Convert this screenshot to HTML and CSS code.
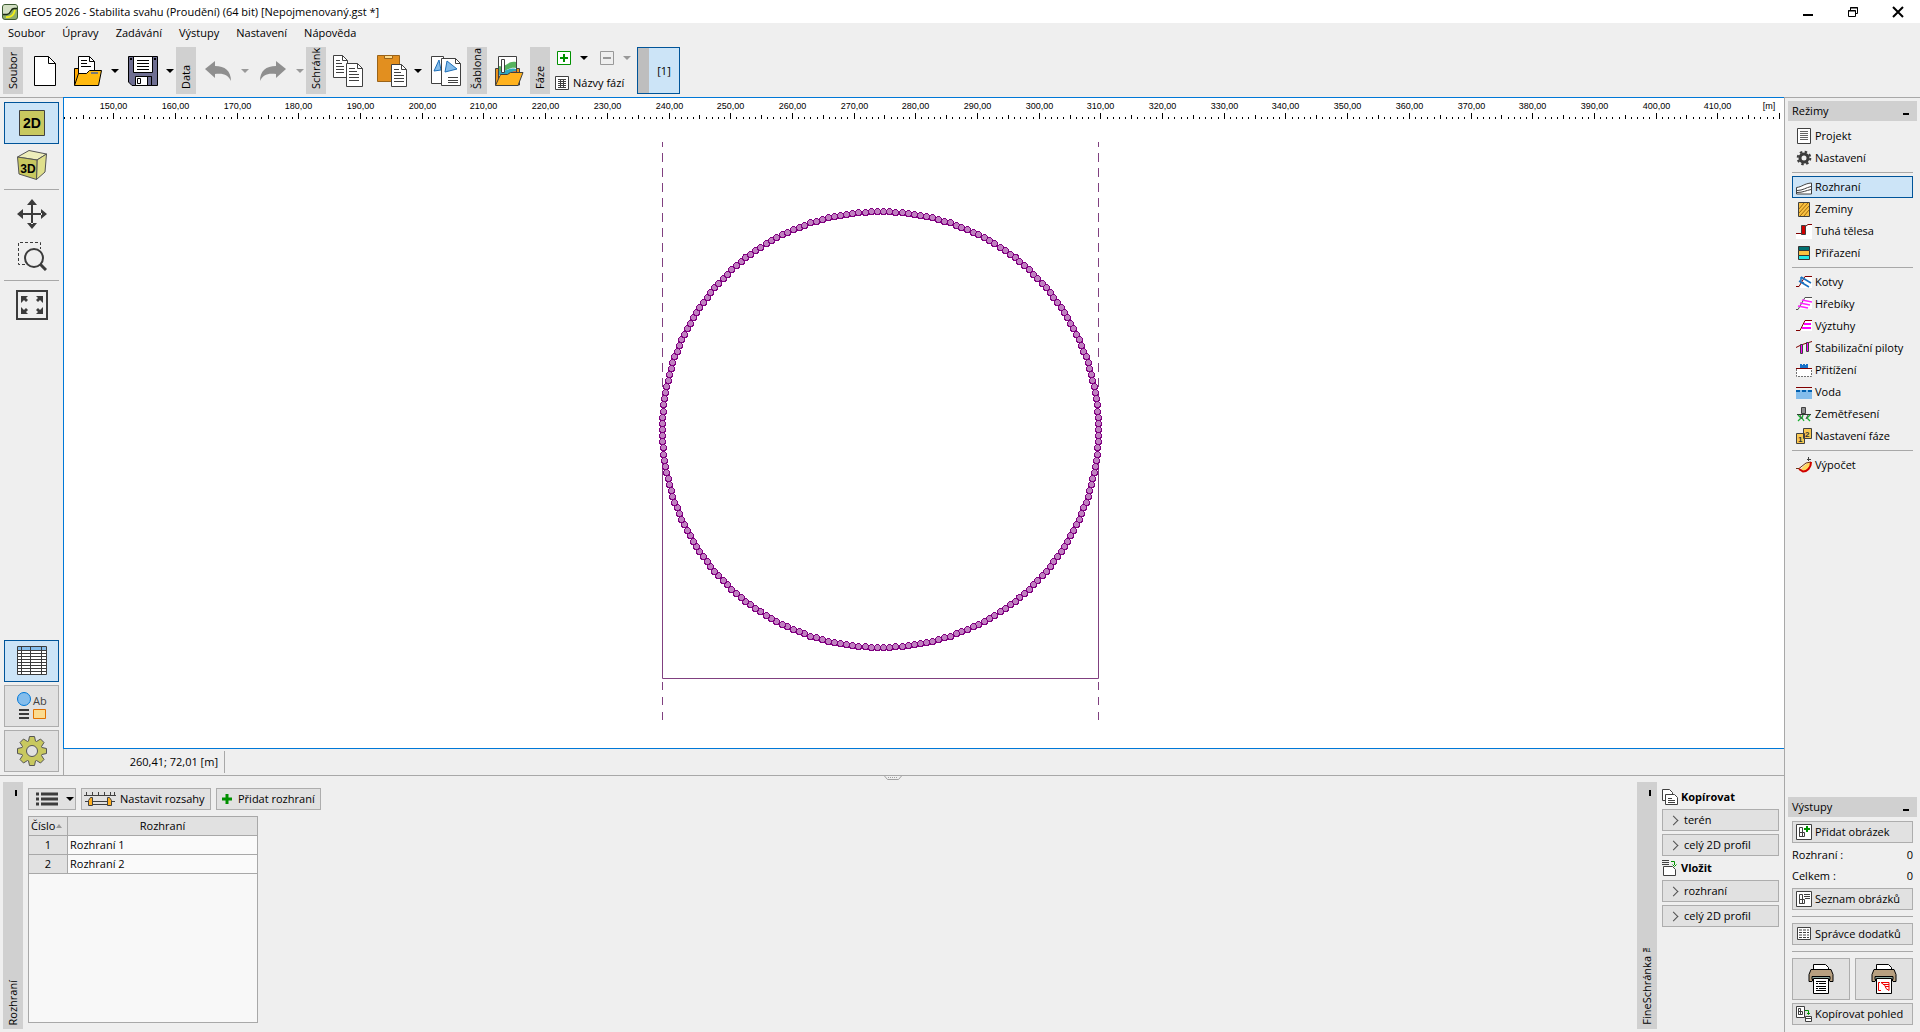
FILE: index.html
```html
<!DOCTYPE html>
<html lang="cs">
<head>
<meta charset="utf-8">
<title>GEO5 2026 - Stabilita svahu</title>
<link rel="stylesheet" href="styles.css">
</head>
<body>
<div class="window">
  <header class="titlebar">
    <svg class="app-icon" width="16" height="16" viewBox="0 0 16 16"><rect x=".5" y=".5" width="15" height="15" rx="2.5" fill="#8fae6c" stroke="#3c5a32"/><path d="M1 10h4c4 0 3-6 7-6h3V3a2 2 0 0 0-2-2H3a2 2 0 0 0-2 2z" fill="#d3dfc4"/><path d="M1 10.500h4c4 0 3-6 7-6h3" fill="none" stroke="#1c2a14" stroke-width="1.300"/><path d="M4 13c6 1 8-3 9-7" fill="none" stroke="#f2ee18" stroke-width="1.800"/></svg>
    <h1 class="title">GEO5 2026 - Stabilita svahu (Proudění) (64 bit) [Nepojmenovaný.gst *]</h1>
    <div class="window-buttons">
      <button class="window-button" aria-label="Minimalizovat"><svg width="12" height="12"><path d="M1 9h10" stroke="#000" stroke-width="2"/></svg></button>
      <button class="window-button" aria-label="Obnovit"><svg width="12" height="12" fill="none" stroke="#000"><path d="M1.500 4.500h7v6h-7zM1 5h8M3.500 4V1.500h7v6H9M3 2h8"/></svg></button>
      <button class="window-button" aria-label="Zavřít"><svg width="12" height="12"><path d="M1 1l10 10M11 1L1 11" stroke="#000" stroke-width="2"/></svg></button>
    </div>
  </header>

  <nav class="menubar">
    <button class="menu">Soubor</button><button class="menu">Úpravy</button><button class="menu">Zadávání</button><button class="menu">Výstupy</button><button class="menu">Nastavení</button><button class="menu">Nápověda</button>
  </nav>

  <div class="toolbar">
    <div class="tool-group">
      <span class="group-label">Soubor</span>
      <button class="tool" aria-label="Nový"><svg width="30" height="30"><path d="M4.500.5h14l7 7v22h-21z" fill="#fff" stroke="#000"/><path d="M18.500.5v7h7" fill="none" stroke="#000"/></svg></button>
      <button class="tool split" aria-label="Otevřít"><svg width="30" height="30"><path d="M1.500 29V12.500h8l2 3h13V29z" fill="#ffa800" stroke="#000"/><path d="M5.500 18V.5h11l5 5V18z" fill="#fff" stroke="#000"/><path d="M16.500.5v5h5M8 4.500h6M8 7.500h6M8 10.500h10" fill="none" stroke="#000"/><path d="M1.500 29.500l4-12h8l3-3h12l-3 15z" fill="#ffb90f" stroke="#000"/><path d="M18 17h7" stroke="#777" stroke-width="2"/></svg><span class="caret"></span></button>
      <button class="tool split" aria-label="Uložit"><svg width="30" height="30"><path d="M.5.5h29v29H4l-3.500-3.500z" fill="#6e6e91" stroke="#000"/><path d="M5.500.5h19v16h-19z" fill="#fff" stroke="#000"/><path d="M9 4.500h12M9 7.500h12M9 10.500h12M9 13.500h12" stroke="#000"/><path d="M7.500 20.500h16v9h-16z" fill="#fff" stroke="#000"/><path d="M19.500 20.500h4v9h-4z" fill="#6e6e91" stroke="#000"/><path d="M9.500 22.500h3v5h-3z" fill="#fff" stroke="#000"/><path d="M2 3h2M26 3h2" stroke="#000" stroke-width="2"/></svg><span class="caret"></span></button>
    </div>
    <div class="tool-group">
      <span class="group-label">Data</span>
      <button class="tool split" aria-label="Zpět"><svg width="30" height="30"><path d="M2 13L12 5v5c10 0 16 5 16 15-3-6-7-8-16-7v4z" fill="#8f8f8f"/></svg><span class="caret off"></span></button>
      <button class="tool split" aria-label="Vpřed"><svg width="30" height="30"><path d="M28 13L18 5v5C8 10 2 15 2 25c3-6 7-8 16-7v4z" fill="#8f8f8f"/></svg><span class="caret off"></span></button>
    </div>
    <div class="tool-group">
      <span class="group-label">Schránk</span>
      <button class="tool" aria-label="Kopírovat"><svg width="32" height="32" fill="#fff" stroke="#404040"><path d="M1.500.5h9l5 5v17h-14z"/><path d="M10.500.5v5h5M4 5.500h4M4 8.500h6M4 11.500h8M4 14.500h8M4 17.500h8" fill="none"/><path d="M14.500 8.500h11l5 5v18h-16z"/><path d="M25.500 8.500v5h5M17 13.500h6M17 16.500h8M17 19.500h10M17 22.500h10M17 25.500h10" fill="none"/></svg></button>
      <button class="tool split" aria-label="Vložit"><svg width="32" height="32" fill="#fff" stroke="#404040"><path d="M1.500.5h22v26h-22z" fill="#e28f1f" stroke="#9a6318"/><path d="M8.500.5h8v3h-8z" fill="#ffdc8c" stroke="#9a6318"/><path d="M15.500 9.500h10l5 5v17h-15z"/><path d="M25.500 9.500v5h5M18 14.500h5M18 17.500h7M18 20.500h10M18 23.500h10M18 26.500h10" fill="none"/></svg><span class="caret"></span></button>
      <button class="tool" aria-label="Kopírovat obrázek"><svg width="32" height="32" fill="#fff" stroke="#404040"><path d="M1.500 1.500h12v27h-12z"/><path d="M4 16l5-11 2 10z" fill="#84bdec" stroke="#1e6fb8"/><path d="M11.500 3.500h14l5 5v22h-19z"/><path d="M25.500 3.500v5h5" fill="none"/><path d="M15 17l2-11 10 8z" fill="#84bdec" stroke="#1e6fb8"/><path d="M18 22.500h10M18 25.500h10M18 27.500h10" fill="none"/></svg></button>
    </div>
    <div class="tool-group">
      <span class="group-label">Šablona</span>
      <button class="tool" aria-label="Šablona"><svg width="30" height="30"><path d="M1.500 29V12.500h24V29z" fill="#e8921a" stroke="#404040"/><path d="M4.500.5h18v22h-18z" fill="#fff" stroke="#404040"/><path d="M5 10c7 2 9-6 17-4v6c-8-1-9 4-17 3z" fill="#56b35f"/><path d="M5 15c8 1 9-4 17-2v6H5z" fill="#2fa8c0"/><path d="M12 20c4-3 6-5 10-5v6H12z" fill="#e8642a"/><path d="M7.500 3.500h3v13h-3z" fill="#fff" stroke="#404040"/><path d="M1.500 29.500l5-11h7l3-2h12.500l-5 13z" fill="#ffb21e" stroke="#404040"/></svg></button>
    </div>
    <div class="tool-group">
      <span class="group-label">Fáze</span>
      <div class="phases">
        <div class="phase-row">
          <button class="mini split" aria-label="Přidat fázi"><svg width="14" height="14"><path d="M.5.5h13v13H.5z" fill="#fff" stroke="#009000"/><path d="M7 3v8M3 7h8" stroke="#009000" stroke-width="2"/></svg><span class="caret"></span></button>
          <button class="mini split" aria-label="Odebrat fázi"><svg width="14" height="14"><path d="M.5.5h13v13H.5z" fill="none" stroke="#999"/><path d="M3 7h8" stroke="#999" stroke-width="2"/></svg><span class="caret off"></span></button>
        </div>
        <button class="mini names"><svg width="14" height="14"><path d="M.5.5h13v13H.5z" fill="#fff" stroke="#404040"/><path d="M3 3.500h8M3 5.500h8M3 7.500h8M3 9.500h8M3 11.500h8M5.500 3v9M8.500 3v9" stroke="#404040"/></svg>Názvy fází</button>
      </div>
      <button class="phase">[1]</button>
    </div>
  </div>

  <div class="workspace">
    <div class="center">
      <div class="view-row">
        <div class="side-tools">
          <button class="side-tool active" aria-label="2D"><svg width="30" height="30"><path d="M2.500 2.500h25v25h-25z" fill="#c8c85f" stroke="#404040"/><text x="15" y="20" class="t2d">2D</text></svg></button>
          <button class="side-tool" aria-label="3D"><svg width="30" height="30" stroke="#555" stroke-linejoin="round"><path d="M.500 7L12 .500 29.500 4 20 10z" fill="#eeeebb"/><path d="M20 10l9.500-6-1.500 18-8.500 7.500z" fill="#e0e08c"/><path d="M.500 7L20 10l-.500 19.500L2 24z" fill="#c8c85f"/><text x="11" y="23" class="t3d">3D</text></svg></button>
          <hr class="rule">
          <button class="side-tool" aria-label="Posun"><svg width="30" height="30" fill="#3c3c3c"><path d="M14 5h2v20h-2zM5 14h20v2H5zM15 0l5 6H10zM15 30l5-6H10zM0 15l6-5v10zM30 15l-6-5v10z"/></svg></button>
          <button class="side-tool" aria-label="Lupa"><svg width="30" height="30" fill="none" stroke="#3c3c3c"><path d="M8 23.500H1.500v-22h22V8" stroke-dasharray="3 2"/><circle cx="17" cy="17" r="9" stroke-width="2"/><path d="M23 23l6 6" stroke-width="3"/></svg></button>
          <hr class="rule">
          <button class="side-tool" aria-label="Celý pohled"><svg width="32" height="30"><path d="M1 1h30v28H1z" fill="none" stroke="#3c3c3c" stroke-width="2"/><path d="M5 6h7l-2 2 2 2-2 2-2-2-3 3zM27 6h-7l2 2-2 2 2 2 2-2 3 3zM5 24h7l-2-2 2-2-2-2-2 2-3-3zM27 24h-7l2-2-2-2 2-2 2 2 3-3z" fill="#3c3c3c"/></svg></button>
          <div class="side-bottom">
            <button class="side-tool framed active" aria-label="Tabulka"><svg width="30" height="30"><path d="M.5.5h29v28H.5z" fill="#fff"/><path d="M1 1h28v3H1z" fill="#84bdec"/><path d="M.5.5h29v28H.5zM0 4.500h30M0 7.500h30M0 10.500h30M0 13.500h30M0 16.500h30M0 19.500h30M0 22.500h30M0 25.500h30M4.500 0v28M13.500 0v28M24.500 0v28" fill="none" stroke="#3c3c3c"/></svg></button>
            <button class="side-tool framed" aria-label="Styl kreslení"><svg width="30" height="30"><circle cx="7" cy="8" r="6.500" fill="#84bdec" stroke="#0078d7"/><text x="16" y="14" class="tab">Ab</text><path d="M2 19h10M2 23h10M2 27h10" stroke="#3c3c3c" stroke-width="2"/><path d="M16.500 18.500h12v9h-12z" fill="#fbdb90" stroke="#e07000"/></svg></button>
            <button class="side-tool framed" aria-label="Nastavení pohledu"><svg width="30" height="30"><path d="M11.500 5.100L12.500.5h5l1 4.600 1 .4 4-2.500 3.500 3.500-2.500 4 .4 1 4.600 1v5l-4.600 1-.4 1 2.500 4-3.500 3.500-4-2.500-1 .4-1 4.600h-5l-1-4.600-1-.4-4 2.500L3 23.500l2.500-4-.4-1-4.600-1v-5l4.600-1 .4-1L3 6.500 6.500 3l4 2.500z" fill="#c8c85f" stroke="#555" stroke-linejoin="round"/><circle cx="15" cy="15" r="5.500" fill="#e1e1e1" stroke="#555"/></svg></button>
          </div>
        </div>
        <div class="view">
          <svg class="drawing" id="drawing" role="img" aria-label="Profil"></svg>
          <div class="status"><output class="coords">260,41; 72,01 [m]</output></div>
        </div>
      </div>

      <div class="bottom">
        <svg class="grip" width="18" height="4"><path d="M.5 0l3 3.500h11l3-3.500" fill="#efefef" stroke="#a0a0a0"/><path d="M4 1.500h10" stroke="#a0a0a0" stroke-dasharray="1 1"/></svg>
        <div class="strip"><i class="pin"></i><span class="strip-label">Rozhraní</span></div>
        <section class="interfaces">
          <div class="actions">
            <button class="btn list-btn" aria-label="Seznam"><svg width="22" height="14"><path d="M0 2h3M5 2h17M0 7h3M5 7h17M0 12h3M5 12h17" stroke="#3c3c3c" stroke-width="3"/></svg><span class="caret"></span></button>
            <button class="btn range-btn"><svg width="32" height="16"><path d="M0 4.500h32M2.500 1v3M8.500 1v3M14.500 1v3M20.500 1v3M26.500 1v3M30.500 1v3M1 10.500h30M7 13.500h18" stroke="#404040" fill="none"/><path d="M4.500 14.500v-5l2-3h2v8zM27.500 14.500v-5l-2-3h-2v8z" fill="#ffb020" stroke="#404040"/></svg>Nastavit rozsahy</button>
            <button class="btn add-btn"><svg width="10" height="10"><path d="M5 0v10M0 5h10" stroke="#009000" stroke-width="3"/></svg>Přidat rozhraní</button>
          </div>
          <div class="grid">
            <table class="table">
              <thead><tr><th class="num"><span class="sort">Číslo<i class="up"></i></span></th><th>Rozhraní</th></tr></thead>
              <tbody><tr><th class="num">1</th><td>Rozhraní 1</td></tr><tr><th class="num">2</th><td>Rozhraní 2</td></tr></tbody>
            </table>
          </div>
        </section>
        <div class="strip"><i class="pin"></i><span class="strip-label">FineSchránka™</span></div>
        <section class="clipboard">
          <h2 class="clip-title"><svg width="16" height="16" fill="#fff" stroke="#404040"><path d="M.5 11.500V.500h7l3 3v8z"/><path d="M3.500 15.500v-10h9l3 3v7z"/><path d="M6 9.500h4M6 11.500h7M6 13.500h7"/></svg>Kopírovat</h2>
          <button class="btn clip-btn"><i class="chev"></i>terén</button>
          <button class="btn clip-btn"><i class="chev"></i>celý 2D profil</button>
          <h2 class="clip-title"><svg width="16" height="16"><path d="M1.500 15.500v-9h9l3 3v6z" fill="#fff" stroke="#404040"/><path d="M0 .500h7M0 2.500h7M0 4.500h7" stroke="#404040"/><path d="M9 1.500h3.500V5M10.500 4.500l2 2 2-2" fill="none" stroke="#009000"/></svg>Vložit</h2>
          <button class="btn clip-btn"><i class="chev"></i>rozhraní</button>
          <button class="btn clip-btn"><i class="chev"></i>celý 2D profil</button>
        </section>
      </div>
    </div>

    <aside class="sidebar">
      <h2 class="panel-title">Režimy<i class="min"></i></h2>
      <nav class="modes">
        <button class="mode"><svg width="16" height="16"><path d="M1.500.5h13v15h-13z" fill="#fff" stroke="#404040"/><path d="M4 3.500h8M4 5.500h8M4 7.500h8M4 9.500h8M4 11.500h8" stroke="#666"/></svg>Projekt</button>
        <button class="mode"><svg width="16" height="16" fill="none" stroke="#3c3c3c"><circle cx="8" cy="8" r="4" stroke-width="3"/><circle cx="8" cy="8" r="6.300" stroke-width="2" stroke-dasharray="2.500 2.440"/></svg>Nastavení</button>
        <hr class="rule">
        <button class="mode active"><svg width="16" height="16"><path d="M.5 8.500C6 8 8 4.500 15.500 4v11H.5z" fill="#fff"/><path d="M.5 8.500C6 8 8 4.500 15.500 4v11H.5zM1 11.500c6 0 9-3 14-4M1 13.500c6 0 9-2 14-3" fill="none" stroke="#404040"/></svg>Rozhraní</button>
        <button class="mode"><svg width="16" height="16"><path d="M2.500 1.500h11v14h-11z" fill="#f9c040" stroke="#404040"/><path d="M3 8l5-6M3 12l9-10M4 15l9-10M8 15l5-6" stroke="#a06a10"/></svg>Zeminy</button>
        <button class="mode"><svg width="16" height="16"><path d="M0 10h5V4l11-3v15H0z" fill="#fff"/><path d="M0 10.500h6M10 3l2-1.500h4" stroke="#800000" fill="none"/><path d="M5.500 2.500h4v9h-4z" fill="#d00000" stroke="#404040"/></svg>Tuhá tělesa</button>
        <button class="mode"><svg width="16" height="16"><path d="M2.500 1.500h11v4h-11z" fill="#007070" stroke="#333"/><path d="M2.500 5.500h11v5h-11z" fill="#f9c040" stroke="#333"/><path d="M2.500 10.500h11v4h-11z" fill="#20e8e8" stroke="#333"/></svg>Přiřazení</button>
        <hr class="rule">
        <button class="mode"><svg width="16" height="16"><path d="M4 12L9 2h7v12H4z" fill="#fff"/><path d="M0 12.500h3L9 2.500h7" stroke="#800000" fill="none"/><path d="M5 3l10 6M3 7l10 6M5 3v4M4 8l4 1" stroke="#1870c0" fill="none" stroke-width="1.500"/></svg>Kotvy</button>
        <button class="mode"><svg width="16" height="16"><path d="M4 12L9 2h7v11H4z" fill="#fff"/><path d="M0 13.500h2L9 1.500h7" stroke="#505050" fill="none"/><path d="M6 4l10 2M4 7l10 2M2 10l10 2" stroke="#ff20ff" stroke-width="1.500"/></svg>Hřebíky</button>
        <button class="mode"><svg width="16" height="16"><path d="M4 13L9 3h7v10z" fill="#fff"/><path d="M0 12.500h4L9 2.500h7" stroke="#800000" fill="none"/><path d="M8 6h7M6 10h9" stroke="#ff00ff" stroke-width="2"/></svg>Výztuhy</button>
        <button class="mode"><svg width="16" height="16"><path d="M0 7.500L5 5l6-2 5-1.500" stroke="#800000" fill="none"/><path d="M4.500 4.500h2v9h-2zM10.500 2.500h2v9h-2z" fill="#ff00ff" stroke="#404040"/></svg>Stabilizační piloty</button>
        <button class="mode"><svg width="16" height="16"><path d="M.5 7v7.500h15V7" fill="#fff" stroke="#707070" stroke-dasharray="2 1"/><path d="M0 6.500h16" stroke="#800000"/><path d="M4 2h2v1h1V2h2v1h1V2h2v4H4z" fill="#1870c8"/></svg>Přitížení</button>
        <button class="mode"><svg width="16" height="16"><path d="M0 6h16v9H0z" fill="#84bdec"/><path d="M0 3.500h16" stroke="#800000"/><path d="M0 7h16" stroke="#0060b0" stroke-width="2" stroke-dasharray="4 2"/></svg>Voda</button>
        <button class="mode"><svg width="16" height="16"><path d="M5.500 1.500h4v6h-4z" fill="#909090" stroke="#404040"/><path d="M1 8.500h14" stroke="#333"/><path d="M2 9l3 3-3 3M7 9l-1 3 2 3M14 9l-3 3 3 3" fill="none" stroke="#18b030" stroke-width="1.300"/><path d="M4 9l2 4M12 9l-2 4" stroke="#444"/></svg>Zemětřesení</button>
        <button class="mode"><svg width="16" height="16"><path d="M.5 5.500h8v10h-8zM7.500.5h8v10h-8z" fill="#f9c850" stroke="#404040"/><text x="2" y="14" class="tn">1</text><text x="9" y="9" class="tn">2</text></svg>Nastavení fáze</button>
        <hr class="rule">
        <button class="mode"><svg width="16" height="16"><path d="M3 13C7 12 8 6 15.500 5c1 5-4 10-8 10z" fill="#ffd75c"/><path d="M0 11.500h3L10 6l5-1" fill="none" stroke="#703010"/><path d="M15 5c0 6-4 9.500-8 9.500L3 12" fill="none" stroke="#d00000" stroke-width="2"/><path d="M12.500 0v4M11 2.500h4" stroke="#404040"/></svg>Výpočet</button>
      </nav>

      <h2 class="panel-title outputs-title">Výstupy<i class="min"></i></h2>
      <div class="outputs">
        <button class="btn out-btn"><svg width="16" height="16"><path d="M.5.5h15v15H.5z" fill="#fff" stroke="#404040"/><path d="M3.500 3.500h3v9h-3zM3.500 8.500h5v4h-5" fill="none" stroke="#404040"/><path d="M11 2v6M8 5h6" stroke="#009000" stroke-width="2"/></svg>Přidat obrázek</button>
        <dl class="counts"><div class="count"><dt>Rozhraní :</dt><dd>0</dd></div><div class="count"><dt>Celkem :</dt><dd>0</dd></div></dl>
        <button class="btn out-btn"><svg width="16" height="16"><path d="M.5.5h15v15H.5z" fill="#fff" stroke="#404040"/><path d="M3.500 3.500h3v9h-3zM3.500 8.500h5v4h-5M8 3.500h6M8 5.500h6M9 7.500h5" fill="none" stroke="#404040"/></svg>Seznam obrázků</button>
        <hr class="rule wide">
        <button class="btn out-btn"><svg width="16" height="16"><path d="M1.500 1.500h13v12h-13z" fill="#fff" stroke="#404040"/><path d="M3 4h10M3 6.500h10M3 9h10M3 11.500h10" stroke="#404040" stroke-dasharray="3 1"/></svg>Správce dodatků</button>
        <hr class="rule wide">
        <div class="printers">
          <button class="btn print-btn" aria-label="Tisk protokolu"><svg width="26" height="30"><path d="M5.500 6V.5h12l3 3V6z" fill="#fff" stroke="#000"/><path d="M3 5.500h20l2 5v7h-3l-2-4H6l-2 4H1v-7z" fill="#b8a080" stroke="#000"/><path d="M4 12.500h18v3H4z" fill="#8fa8a0" stroke="#000"/><path d="M5.500 14.500h15v15h-15z" fill="#fff" stroke="#000"/><path d="M8 17.500h10M8 19.500h2M11 19.500h7M8 22.500h10M8 24.500h2M11 24.500h7M8 26.500h10" stroke="#000"/></svg></button>
          <button class="btn print-btn" aria-label="Tisk pohledu"><svg width="26" height="30"><path d="M5.500 6V.5h12l3 3V6z" fill="#fff" stroke="#000"/><path d="M3 5.500h20l2 5v7h-3l-2-4H6l-2 4H1v-7z" fill="#b8a080" stroke="#000"/><path d="M4 12.500h18v3H4z" fill="#8fa8a0" stroke="#000"/><path d="M5.500 14.500h15v15h-15z" fill="#fff" stroke="#000"/><path d="M9 18.500H7.500v8H10M10 18.500h8v8l-3-2-1-3-4-3M12 20.500h6M14 22.500h4" fill="none" stroke="#f00000"/></svg></button>
        </div>
        <button class="btn out-btn"><svg width="16" height="16"><path d="M.5.5h8v11h-8z" fill="#fff" stroke="#404040"/><path d="M2.500 2.500h2v6h-2zM2.500 5.500h4v3h-4" fill="none" stroke="#404040"/><path d="M9 4.500h3.500V8M11 7l1.500 1.500L14 7" fill="none" stroke="#009000"/><path d="M9.500 10.500h6v5h-6zM9 12.500h7" fill="#fff" stroke="#404040"/></svg>Kopírovat pohled</button>
      </div>
    </aside>
  </div>
</div>
<script src="app.js"></script>
</body>
</html>
```
FILE: styles.css
```css
* { box-sizing: border-box; }
body { margin: 0; background: #efefef; color: #000; font: 11px/16px "Open Sans", "Noto Sans", sans-serif; }
button { font: inherit; color: inherit; background: none; border: 0; padding: 0; margin: 0; white-space: nowrap; }
h1, h2, dl, dd { margin: 0; font: inherit; }
svg { display: block; flex: none; }

.window { display: flex; flex-direction: column; height: 100vh; min-height: 900px; overflow: hidden; }
.titlebar { display: flex; align-items: center; height: 23px; padding-left: 2px; gap: 5px; background: #fff; }
.title { flex: 1; }
.window-buttons { display: flex; }
.window-button { display: grid; place-items: center; width: 45px; height: 23px; }

.menubar { display: flex; gap: 17px; height: 20px; padding-left: 8px; align-items: center; }

.toolbar { display: flex; height: 54px; padding: 4px 3px 3px; }
.tool-group { display: flex; gap: 1px; }
.group-label { display: flex; align-items: center; width: 20px; height: 47px; padding-top: 5px; background: #d0d0d0; writing-mode: vertical-rl; transform: rotate(180deg); overflow: hidden; white-space: nowrap; }
.tool { display: flex; align-items: center; justify-content: center; width: 42px; height: 47px; }
.tool.split { width: 54px; padding-left: 6px; justify-content: flex-start; }
.tool.split svg { width: 32px; }
.caret { width: 0; height: 0; margin: 0 3px; border: 4px solid transparent; border-top-color: #000; border-bottom: 0; }
.caret.off { border-top-color: #999; }
.tool.split .caret { margin: 0 0 0 6px; }
.phases { display: flex; flex-direction: column; gap: 9px; padding: 3px 0 0 4px; width: 85px; }
.phase-row { display: flex; gap: 15px; padding-left: 2px; }
.mini { display: flex; align-items: center; gap: 4px; height: 16px; }
.mini.split { gap: 6px; width: 28px; }
.mini .caret { margin: 0 0 0 3px; }
.phase { width: 43px; height: 47px; border: 1px solid #005499; background: linear-gradient(90deg, #bebebe 11px, #cce4f7 11px); padding-left: 11px; }

.workspace { display: flex; flex: 1; min-height: 0; }
.center { display: flex; flex-direction: column; flex: 1; min-width: 0; }
.view-row { display: flex; flex: 1; min-height: 0; border-bottom: 1px solid #a8a8a8; }
.side-tools { display: flex; flex-direction: column; width: 63px; padding: 4px 4px 3px; border-top: 1px solid #a8a8a8; }
.side-tool { display: grid; place-items: center; height: 42px; flex: none; }
.rule { width: 100%; height: 1px; margin: 3px 0; border: 0; background: #a8a8a8; flex: none; }
.rule.wide { margin: 6px 0; }
.side-bottom { display: flex; flex-direction: column; gap: 3px; margin-top: auto; }
.framed { border: 1px solid #adadad; background: #e1e1e1; }
.side-tool.active, .mode.active { border: 1px solid #005499; background: #cce4f7; }
.t2d { font: bold 14px "Liberation Sans", sans-serif; text-anchor: middle; }
.t3d { font: bold 12px "Liberation Sans", sans-serif; text-anchor: middle; stroke: none; }
.tab { font: 11px "Open Sans", sans-serif; fill: #404040; }
.tn { font: bold 8px "Liberation Sans", sans-serif; fill: #333; }

.view { display: flex; flex-direction: column; flex: 1; min-width: 0; }
.drawing { flex: 1 1 0; width: 100%; min-height: 0; background: #fff; border: 1px solid #0078d7; }
.ruler-label { font: 9px "Liberation Sans", sans-serif; text-anchor: middle; }
.status { display: flex; align-items: center; height: 26px; border-left: 1px solid #a8a8a8; }
.coords { display: flex; align-items: center; justify-content: flex-end; width: 161px; height: 22px; padding-right: 6px; border-right: 1px solid #a8a8a8; }

.bottom { position: relative; display: flex; height: 256px; padding: 6px 6px 3px 3px; gap: 5px; }
.grip { position: absolute; top: 0; left: 50%; margin-left: -9px; }
.strip { display: flex; flex-direction: column; align-items: center; justify-content: space-between; width: 20px; background: #d0d0d0; padding: 8px 0 4px; }
.pin { width: 2px; height: 6px; margin-left: 6px; background: #000; }
.strip-label { writing-mode: vertical-rl; transform: rotate(180deg); white-space: nowrap; }
.interfaces { display: flex; flex-direction: column; flex: 1; gap: 6px; padding: 6px 0; }
.actions { display: flex; gap: 5px; }
.btn { display: flex; align-items: center; height: 22px; border: 1px solid #adadad; background: #e1e1e1; }
.list-btn { width: 48px; padding-left: 7px; gap: 5px; }
.range-btn { width: 130px; padding-left: 2px; gap: 4px; }
.add-btn { width: 105px; padding-left: 5px; gap: 6px; }
.grid { flex: 1; width: 230px; border: 1px solid #a8a8a8; background: #f8f8f8; }
.table { width: 100%; border-collapse: separate; border-spacing: 0; table-layout: fixed; }
.table th, .table td { height: 19px; padding: 0 2px; border: 0 solid #a8a8a8; border-bottom-width: 1px; font-weight: normal; line-height: 18px; }
.table th { background: #e1e1e1; }
.table td { text-align: left; background: #fafafa; }
.table .num { width: 39px; border-right-width: 1px; }
.sort { display: flex; align-items: center; gap: 1px; }
.up { border: 3px solid transparent; border-bottom: 4px solid #999; border-top: 0; }
.clipboard { display: flex; flex-direction: column; width: 117px; gap: 3px; padding-top: 6px; }
.clip-title { display: flex; align-items: center; gap: 3px; height: 18px; font-weight: bold; }
.clip-btn { padding-left: 7px; gap: 6px; }
.clip-btn .chev { width: 7px; height: 7px; margin-right: 1px; border: 1px solid #505050; border-left: 0; border-bottom: 0; transform: rotate(45deg); }

.sidebar { display: flex; flex-direction: column; width: 136px; border-top: 1px solid #a8a8a8; border-left: 1px solid #a8a8a8; padding: 3px 3px 7px 3px; margin-left: -1px; }
.panel-title { display: flex; justify-content: space-between; height: 20px; padding: 2px 8px 2px 4px; background: #d0d0d0; }
.min { width: 6px; height: 2px; margin-top: 10px; background: #000; }
.modes { display: flex; flex-direction: column; padding: 4px 4px 0; }
.mode { display: flex; align-items: center; gap: 3px; height: 22px; padding-left: 4px; }
.mode.active { padding-left: 3px; }
.outputs-title { margin-top: auto; }
.outputs { display: flex; flex-direction: column; padding: 4px 4px 0; }
.out-btn { padding-left: 3px; gap: 3px; }
.counts { padding: 1px 0 2px; }
.count { display: flex; justify-content: space-between; height: 21px; line-height: 21px; }
.printers { display: flex; gap: 5px; margin-bottom: 3px; }
.print-btn { flex: 1; height: 42px; justify-content: center; }
```
FILE: app.js
```js
const NS = "http://www.w3.org/2000/svg";
const drawing = document.getElementById("drawing");

function add(tag, attrs, text) {
  const el = document.createElementNS(NS, tag);
  for (const key in attrs) el.setAttribute(key, attrs[key]);
  if (text) el.textContent = text;
  drawing.appendChild(el);
}

function draw() {
  drawing.replaceChildren();
  const width = drawing.clientWidth;
  const step = 6.169;
  const first = 142;

  // ruler: a tick for each metre, a label for each ten
  for (let i = 0; i * step + 1 < width - 3; i++) {
    const metre = first + i;
    const x = Math.round(i * step) + 0.5;
    const length = metre % 10 === 0 ? 6 : metre % 5 === 0 ? 4 : 2;
    add("path", { d: `M${x} 21v-${length}`, stroke: "#000" });
    if (metre % 10 === 0 && x < width - 30) {
      add("text", { x: x, y: 11, class: "ruler-label" }, metre + ",00");
    }
  }
  add("text", { x: width - 15, y: 11, class: "ruler-label" }, "[m]");

  // world boundary
  const left = 598.5, right = 1034.5, cx = 816.5, cy = 331.5, r = 218;
  for (const x of [left, right]) {
    add("path", { d: `M${x} 44V${cy}`, stroke: "#804080", "stroke-dasharray": "9 6", "stroke-dashoffset": 4 });
    add("path", { d: `M${x} 584v39`, stroke: "#804080", "stroke-dasharray": "8 7" });
  }
  add("path", { d: `M${left} ${cy}V580.5H${right}V${cy}`, fill: "none", stroke: "#804080" });

  // interface polyline with its vertices
  const count = 222;
  for (let i = 0; i < count; i++) {
    const a = Math.PI + (i * 2 * Math.PI) / count;
    const x = Math.round(cx + r * Math.cos(a) - 0.5) + 0.5;
    const y = Math.round(cy + r * Math.sin(a) - 0.5) + 0.5;
    add("circle", { cx: x, cy: y, r: 3, fill: "#c080c0", stroke: "#800080", "shape-rendering": "crispEdges" });
  }
}

draw();
window.addEventListener("resize", draw);
```
